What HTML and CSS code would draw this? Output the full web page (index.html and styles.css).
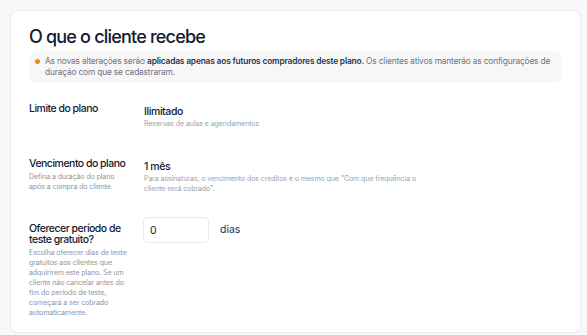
FILE: index.html
```html
<!DOCTYPE html>
<html lang="pt-BR">
<head>
    <meta charset="UTF-8">
    <meta name="viewport" content="width=device-width, initial-scale=1.0">
    <title>O que o cliente recebe</title>
    <link rel="stylesheet" href="styles.css">
</head>
<body>
    <div class="card">
        <h1>O que o cliente recebe</h1>

        <div class="notice">
            <span class="dot"></span>
            <p>As novas alterações serão <strong>aplicadas apenas aos futuros compradores deste plano.</strong> Os clientes ativos manterão as configurações de duração com que se cadastraram.</p>
        </div>

        <div class="row">
            <div class="label">
                <h3>Limite do plano</h3>
            </div>
            <div class="value">
                <div class="main">Ilimitado</div>
                <div class="hint">Reservas de aulas e agendamentos</div>
            </div>
        </div>

        <div class="row">
            <div class="label">
                <h3>Vencimento do plano</h3>
                <p>Defina a duração do plano após a compra do cliente.</p>
            </div>
            <div class="value">
                <div class="main">1 mês</div>
                <div class="hint">Para assinaturas, o vencimento dos créditos é o mesmo que "Com que frequência o cliente será cobrado".</div>
            </div>
        </div>

        <div class="row">
            <div class="label">
                <h3>Oferecer período de teste gratuito?</h3>
                <p>Escolha oferecer dias de teste gratuitos aos clientes que adquirirem este plano. Se um cliente não cancelar antes do fim do período de teste, começará a ser cobrado automaticamente.</p>
            </div>
            <div class="value trial">
                <input type="text" value="0">
                <span class="unit">dias</span>
            </div>
        </div>
    </div>
</body>
</html>
```

FILE: styles.css
```css
body {
    font-family: Inter, "Noto Sans", sans-serif;
    margin: 0;
    padding: 10px 6px 9px 10px;
    background-color: #f8f8f9;
    color: #141a2f;
}
.card {
    background-color: #fff;
    border: 1px solid #ebebef;
    border-radius: 8px;
    padding: 14px 18px 14px 18px;
}
h1 {
    font-size: 18px;
    font-weight: 500;
    letter-spacing: -0.8px;
    margin: 0 0 2px 0;
    line-height: 24px;
}
.notice {
    display: flex;
    gap: 5px;
    background-color: #f7f7f7;
    border-radius: 8px;
    padding: 5px 10px 5px 6px;
    margin-bottom: 20px;
}
.dot {
    flex: none;
    width: 5px;
    height: 5px;
    border-radius: 50%;
    background-color: #f08a24;
    margin-top: 3px;
}
.notice p {
    margin: 0;
    font-size: 8.4px;
    line-height: 11px;
    letter-spacing: -0.18px;
    color: #6f7482;
}
.notice strong {
    color: #2b3452;
    font-weight: 600;
}
.row {
    display: flex;
    margin-bottom: 29px;
}
.row:last-child {
    margin-bottom: 0;
}
.label {
    width: 100px;
    padding-right: 15px;
    flex: none;
}
.label h3 {
    font-size: 10.5px;
    font-weight: 500;
    letter-spacing: -0.5px;
    line-height: 11px;
    margin: 0 0 3px 0;
}
.label p {
    margin: 0;
    font-size: 7.1px;
    line-height: 10px;
    letter-spacing: -0.12px;
    color: #9095a2;
}
.value {
    padding-top: 2px;
}
.main {
    font-size: 10.5px;
    font-weight: 500;
    letter-spacing: -0.4px;
    line-height: 14px;
}
.hint {
    font-size: 7.1px;
    line-height: 10px;
    letter-spacing: -0.12px;
    color: #9ca1ad;
    max-width: 286px;
}
.trial {
    display: flex;
    align-items: center;
    align-self: flex-start;
    gap: 11px;
    padding-top: 0;
    margin-top: -6px;
}
input[type="text"] {
    width: 66px;
    height: 26px;
    padding: 0 6px;
    border: 1px solid #e8e9ee;
    border-radius: 4px;
    box-sizing: border-box;
    font-family: inherit;
    font-size: 10.5px;
    color: #141a2f;
    margin-left: -1px;
}
.unit {
    font-size: 10.5px;
    color: #2b3047;
    margin-top: -2px;
}
```
